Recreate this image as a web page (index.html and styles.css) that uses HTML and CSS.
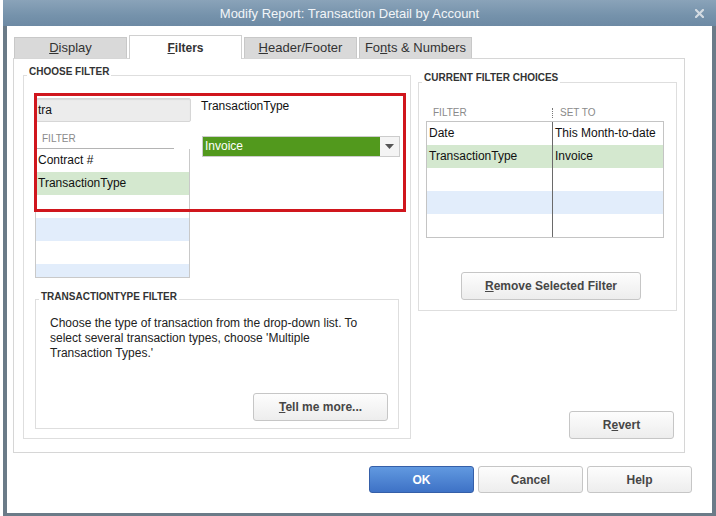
FILE: index.html
```html
<!DOCTYPE html>
<html>
<head>
<meta charset="utf-8">
<link rel="stylesheet" href="styles.css">
</head>
<body>
<div class="behind"></div>
<div class="window">
  <div class="titlebar">
    <div class="title">Modify Report: Transaction Detail by Account</div>
    <div class="close"><svg width="9" height="9" viewBox="0 0 9 9"><path d="M1 1L8 8M8 1L1 8" stroke="#d3dbe2" stroke-width="2.2" stroke-linecap="square"/></svg></div>
  </div>
  <div class="client">
    <div class="tabs">
      <div class="tab"><u>D</u>isplay</div>
      <div class="tab active"><u>F</u>ilters</div>
      <div class="tab"><u>H</u>eader/Footer</div>
      <div class="tab">Fo<u>n</u>ts &amp; Numbers</div>
    </div>
    <div class="panel">
      <div class="group choose">
        <div class="group-label">CHOOSE FILTER</div>
        <div class="choose-body">
          <div class="left-col">
            <div class="search">tra</div>
            <div class="list-head">FILTER</div>
            <div class="list">
              <div class="row">Contract #</div>
              <div class="row green">TransactionType</div>
              <div class="row"></div>
              <div class="row blue"></div>
              <div class="row"></div>
              <div class="row blue"></div>
            </div>
          </div>
          <div class="right-col">
            <div class="field-name">TransactionType</div>
            <div class="dropdown">
              <div class="dd-value">Invoice</div>
              <div class="dd-arrow"><svg width="9" height="5" viewBox="0 0 9 5"><path d="M0 0H9L4.5 5Z" fill="#555"/></svg></div>
            </div>
          </div>
        </div>
        <div class="group tt-group">
          <div class="group-label">TRANSACTIONTYPE FILTER</div>
          <p class="desc">Choose the type of transaction from the drop-down list. To select several transaction types, choose 'Multiple Transaction Types.'</p>
          <button class="btn tell"><u>T</u>ell me more...</button>
        </div>
        <div class="highlight"></div>
      </div>
      <div class="side">
        <div class="group current">
          <div class="group-label">CURRENT FILTER CHOICES</div>
          <div class="table-head">
            <div class="th th-filter">FILTER</div>
            <div class="th th-set"><span class="dots"></span>SET TO</div>
          </div>
          <div class="table">
            <div class="trow"><div class="cell">Date</div><div class="cell c2">This Month-to-date</div></div>
            <div class="trow green"><div class="cell">TransactionType</div><div class="cell c2">Invoice</div></div>
            <div class="trow"><div class="cell"></div><div class="cell c2"></div></div>
            <div class="trow blue"><div class="cell"></div><div class="cell c2"></div></div>
            <div class="trow"><div class="cell"></div><div class="cell c2"></div></div>
          </div>
          <button class="btn remove"><u>R</u>emove Selected Filter</button>
        </div>
        <button class="btn revert">R<u>e</u>vert</button>
      </div>
    </div>
    <div class="footer">
      <button class="btn ok">OK</button>
      <button class="btn">Cancel</button>
      <button class="btn">Help</button>
    </div>
  </div>
</div>
</body>
</html>
```

FILE: styles.css
```css
html, body {
  margin: 0;
  padding: 0;
}
body {
  width: 716px;
  height: 516px;
  overflow: hidden;
  display: flex;
  background: #ffffff;
  font-family: "Liberation Sans", Arial, sans-serif;
  font-size: 12px;
  color: #222;
}
.behind {
  width: 3px;
  background: #fff;
}
.window {
  flex: 1;
  display: flex;
  flex-direction: column;
  background: #6b7b88;
}
.titlebar {
  height: 26px;
  flex: none;
  display: flex;
  align-items: center;
  background: linear-gradient(#8aa3b9, #7592ab 60%, #6d8aa4);
}
.title {
  flex: 1;
  text-align: center;
  padding-left: 7px;
  color: #f2f5f8;
  font-size: 13px;
}
.close {
  width: 20px;
  margin-right: 7px;
  display: flex;
  justify-content: center;
  align-items: center;
}
.client {
  flex: 1;
  background: #fff;
  margin: 0 4px 3px 4px;
  display: flex;
  flex-direction: column;
}
.tabs {
  display: flex;
  gap: 2px;
  align-items: flex-end;
  height: 23px;
  margin: 9px 0 0 7px;
}
.tab {
  box-sizing: border-box;
  width: 113px;
  height: 21px;
  background: #d9d9d9;
  border: 1px solid #c8c8c8;
  border-bottom: none;
  text-align: center;
  line-height: 20px;
  font-size: 13px;
  color: #333;
}
.tab.active {
  height: 24px;
  margin-bottom: -1px;
  background: #fff;
  border-color: #d0d0d0;
  font-weight: bold;
  font-size: 12px;
  padding-top: 2px;
  position: relative;
  z-index: 1;
}
.panel {
  box-sizing: border-box;
  margin-left: 6px;
  width: 672px;
  height: 395px;
  border: 1px solid #d6d6d6;
  display: flex;
  gap: 7px;
  padding: 16px 0 0 9px;
}
.group {
  box-sizing: border-box;
  border: 1px solid #dedede;
}
.group-label {
  width: fit-content;
  background: #fff;
  font-size: 10px;
  line-height: 12px;
  font-weight: bold;
  color: #333;
  padding: 0 2px;
  margin-left: 3px;
}
.choose {
  width: 388px;
  height: 364px;
  position: relative;
}
.choose > .group-label {
  margin-top: -10px;
}
.choose-body {
  display: flex;
  gap: 10px;
  padding: 20px 0 0 11px;
}
.left-col {
  width: 156px;
}
.search {
  box-sizing: border-box;
  margin-left: 1px;
  width: 155px;
  height: 24px;
  background: #ececec;
  border: 1px solid #d6d6d6;
  border-radius: 2px;
  box-shadow: inset 0 1px 1px rgba(0, 0, 0, 0.08);
  padding-left: 1px;
  line-height: 22px;
  color: #111;
}
.list-head {
  margin: 8px 0 0 1px;
  width: 132px;
  height: 18px;
  line-height: 18px;
  border-bottom: 1px solid #b4b4b4;
  padding-left: 6px;
  font-size: 10px;
  color: #8a8a8a;
}
.list {
  box-sizing: border-box;
  width: 155px;
  height: 129px;
  border: 1px solid #c9c9c9;
  border-top: none;
  overflow: hidden;
}
.row {
  height: 23px;
  line-height: 23px;
  padding-left: 2px;
  color: #111;
}
.green {
  background: #d4e8cf;
}
.blue {
  background: #e2edfb;
}
.right-col {
  flex: 1;
}
.field-name {
  line-height: 14px;
  padding-top: 1px;
  color: #111;
}
.dropdown {
  box-sizing: border-box;
  margin: 23px 0 0 1px;
  width: 198px;
  height: 21px;
  border: 1px solid #cccccc;
  display: flex;
}
.dd-value {
  flex: 1;
  background: #52991d;
  color: #fff;
  line-height: 19px;
  padding-left: 2px;
}
.dd-arrow {
  width: 19px;
  background: #f4f4f4;
  display: flex;
  align-items: center;
  justify-content: center;
}
.tt-group {
  width: 364px;
  height: 130px;
  margin: 21px 0 0 11px;
  display: flex;
  flex-direction: column;
}
.tt-group > .group-label {
  margin-top: -9px;
}
.desc {
  margin: 13px 0 0 14px;
  width: 322px;
  line-height: 15px;
  font-size: 12px;
  color: #222;
}
.btn {
  box-sizing: border-box;
  font-family: "Liberation Sans", Arial, sans-serif;
  font-size: 12px;
  font-weight: bold;
  color: #464646;
  background: linear-gradient(#fdfdfd, #ededed);
  border: 1px solid #c6c6c6;
  border-radius: 3px;
  padding: 0;
  height: 28px;
}
.tell {
  width: 135px;
  margin: auto 10px 7px 0;
  align-self: flex-end;
}
.highlight {
  position: absolute;
  left: 10px;
  top: 17px;
  width: 372px;
  height: 119px;
  box-sizing: border-box;
  border: 3px solid #d0161d;
}
.side {
  width: 259px;
  height: 364px;
  display: flex;
  flex-direction: column;
  justify-content: space-between;
  padding-top: 7px;
  box-sizing: border-box;
}
.current {
  height: 229px;
}
.current > .group-label {
  margin-top: -11px;
}
.table-head {
  display: flex;
  margin: 20px 0 0 7px;
  height: 17px;
  line-height: 17px;
  font-size: 10px;
  color: #8a8a8a;
}
.th-filter {
  width: 119px;
  padding-left: 7px;
}
.th-set {
  display: flex;
  align-items: center;
}
.dots {
  display: inline-block;
  height: 10px;
  border-left: 1px dotted #777;
  margin-right: 7px;
}
.table {
  box-sizing: border-box;
  margin-left: 7px;
  width: 238px;
  height: 117px;
  border: 1px solid #c4c4c4;
  overflow: hidden;
}
.trow {
  display: grid;
  grid-template-columns: 125px 1fr;
  height: 23px;
  line-height: 23px;
  color: #111;
}
.cell {
  padding-left: 2px;
  white-space: nowrap;
}
.c2 {
  border-left: 1px solid #6a6a6a;
}
.remove {
  width: 180px;
  margin: 34px 0 0 42px;
}
.revert {
  width: 105px;
  align-self: flex-end;
  margin-right: 3px;
}
.footer {
  display: flex;
  justify-content: flex-end;
  gap: 4px;
  margin-top: 13px;
  padding-right: 20px;
}
.footer .btn {
  width: 105px;
  height: 27px;
}
.footer .ok {
  background: linear-gradient(#6199e0, #3e72c6);
  border-color: #355fa8;
  color: #fff;
}
```
